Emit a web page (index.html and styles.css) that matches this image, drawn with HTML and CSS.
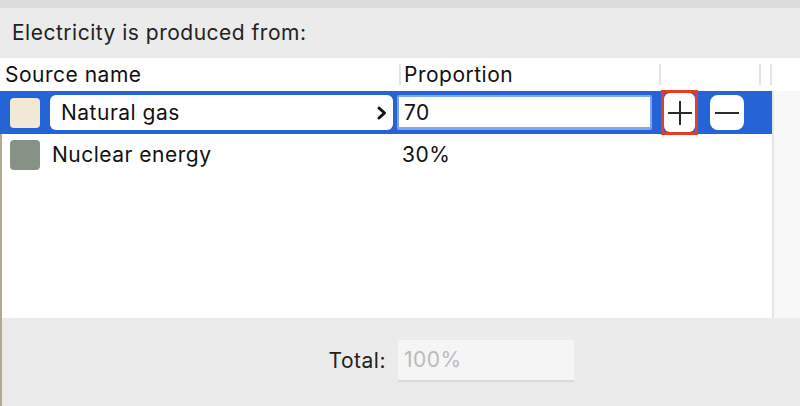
FILE: index.html
```html
<!DOCTYPE html>
<html>
<head>
<meta charset="utf-8">
<link rel="stylesheet" href="styles.css">
</head>
<body>
<div class="topbar"></div>
<div class="title">Electricity is produced from:</div>
<div class="table">
  <div class="thead">
    <div class="th th-name">Source name</div>
    <div class="th th-prop">Proportion</div>
    <div class="th th-act"></div>
    <div class="th th-x"></div>
    <div class="th th-y"></div>
  </div>
  <div class="tbody">
    <div class="rows">
      <div class="row selected">
        <div class="swatch gas"></div>
        <div class="select"><span>Natural gas</span>
          <svg class="chev" width="12" height="16" viewBox="0 0 12 16"><path d="M3 3 L8.5 8 L3 13" fill="none" stroke="#111" stroke-width="3" stroke-linecap="round" stroke-linejoin="round"/></svg>
        </div>
        <div class="input">70</div>
        <div class="btn-focus"><div class="btn plus">
          <svg width="26" height="26" viewBox="0 0 26 26"><path d="M13 1V25M1 13H25" stroke="#2b2b2b" stroke-width="2"/></svg>
        </div></div>
        <div class="btn minus">
          <svg width="26" height="26" viewBox="0 0 26 26"><path d="M1 13H25" stroke="#2b2b2b" stroke-width="2"/></svg>
        </div>
      </div>
      <div class="lower">
        <div class="row">
          <div class="swatch nuclear"></div>
          <div class="name">Nuclear energy</div>
          <div class="prop">30%</div>
        </div>
      </div>
    </div>
    <div class="scroll"></div>
  </div>
</div>
<div class="footer">
  <span class="total-label">Total:</span>
  <div class="total-field">100%</div>
</div>
</body>
</html>
```
FILE: styles.css
```css
html, body {
  margin: 0;
  padding: 0;
}
body {
  width: 800px;
  height: 406px;
  overflow: hidden;
  background: #ebebeb;
  font-family: Inter, "Liberation Sans", sans-serif;
  font-size: 21px;
  letter-spacing: 0.5px;
  color: #111;
  display: flex;
  flex-direction: column;
}
.topbar {
  height: 8px;
  background: #dcdcdc;
}
.title {
  height: 50px;
  display: flex;
  align-items: center;
  padding-left: 12px;
  color: #222;
  padding-bottom: 2px;
  box-sizing: border-box;
}
.table {
  height: 260px;
  background: #fff;
  display: flex;
  flex-direction: column;
}
.thead {
  height: 33px;
  display: flex;
  align-items: center;
}
.th {
  height: 21px;
  display: flex;
  align-items: center;
  box-sizing: border-box;
  white-space: nowrap;
}
.th-name { width: 399px; padding-left: 5px; }
.th-prop { width: 260px; padding-left: 3px; border-left: 2px solid #e4e4e4; }
.th-act { width: 100px; border-left: 2px solid #e4e4e4; }
.th-x { width: 11px; border-left: 2px solid #e4e4e4; }
.th-y { width: 2px; border-left: 2px solid #e4e4e4; }
.tbody {
  flex: 1;
  display: flex;
}
.rows {
  width: 772px;
  display: flex;
  flex-direction: column;
}
.scroll {
  flex: 1;
  background: #f8f8f8;
  border-left: 2px solid #e6e6e6;
}
.row {
  height: 43px;
  display: flex;
  align-items: center;
}
.row.selected {
  background: #2464d6;
}
.lower {
  flex: 1;
  border-left: 2px solid #b3aa92;
}
.lower .row {
  height: 41px;
  margin-left: -2px;
}
.swatch {
  width: 30px;
  height: 30px;
  border-radius: 4px;
  margin-left: 10px;
  flex: none;
}
.gas { background: #f2e8d6; }
.nuclear { background: #879286; }
.select {
  margin-left: 10px;
  width: 343px;
  height: 35px;
  background: #fff;
  border-radius: 6px;
  display: flex;
  align-items: center;
  justify-content: space-between;
  padding: 0 5px 0 11px;
  box-sizing: border-box;
}
.chev { display: block; }
.input {
  margin-left: 4px;
  width: 255px;
  height: 35px;
  background: #fff;
  border: 2px solid #7ea6ea;
  border-bottom-width: 3px;
  border-radius: 2px;
  box-sizing: border-box;
  display: flex;
  align-items: center;
  padding-left: 5px;
}
.btn-focus {
  margin-left: 9px;
  width: 37px;
  height: 45px;
  border: 3px solid #e33d26;
  box-sizing: border-box;
  display: flex;
  align-items: center;
  justify-content: center;
}
.btn {
  background: #fff;
  display: flex;
  align-items: center;
  justify-content: center;
  box-sizing: border-box;
}
.btn svg { display: block; }
.plus {
  width: 31px;
  height: 39px;
  border-radius: 6px;
}
.minus {
  margin-left: 12px;
  width: 34px;
  height: 35px;
  border-radius: 8px;
}
.name {
  margin-left: 12px;
  width: 350px;
}
.prop {
  margin-left: 0;
}
.footer {
  flex: 1;
  display: flex;
  align-items: center;
  padding-left: 319px;
  border-left: 2px solid #b3aa92;
  padding-bottom: 3px;
  box-sizing: border-box;
}
.total-label {
  width: 65px;
  text-align: right;
  color: #222;
}
.total-field {
  margin-left: 12px;
  width: 176px;
  height: 42px;
  background: #f5f5f5;
  border-bottom: 2px solid #dadada;
  box-sizing: border-box;
  display: flex;
  align-items: center;
  padding-left: 6px;
  color: #bbb;
}
```
